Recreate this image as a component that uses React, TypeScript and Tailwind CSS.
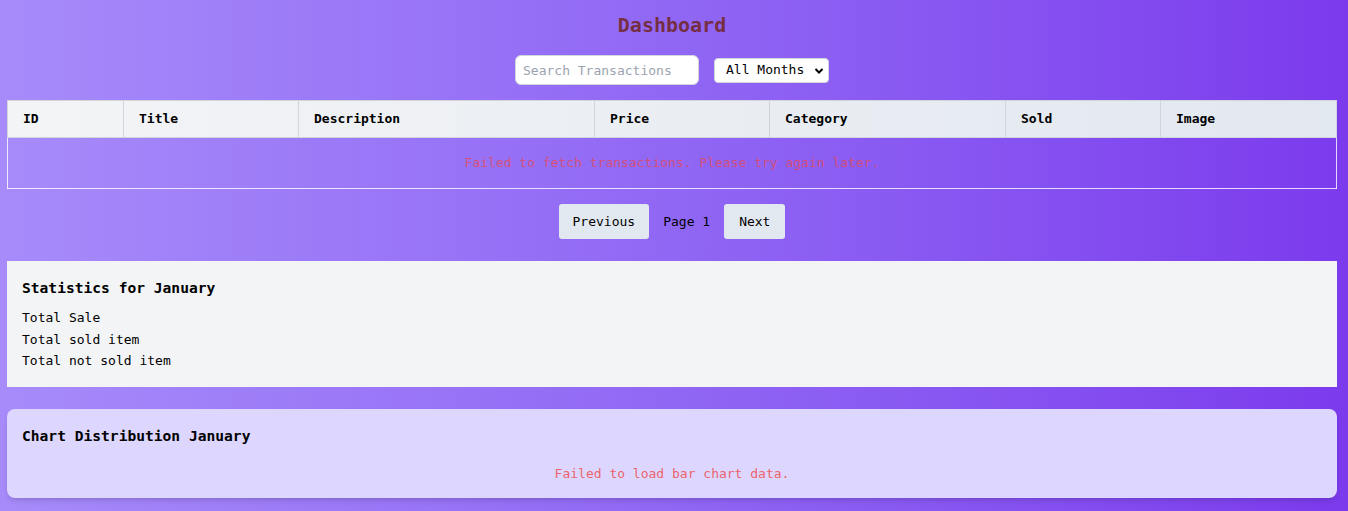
import React, { useState } from 'react';

const columns = [
  { label: 'ID', w: 'w-[116px]' },
  { label: 'Title', w: 'w-[175px]' },
  { label: 'Description', w: 'w-[296px]' },
  { label: 'Price', w: 'w-[175px]' },
  { label: 'Category', w: 'w-[236px]' },
  { label: 'Sold', w: 'w-[155px]' },
  { label: 'Image', w: 'w-auto' },
];

const App: React.FC = () => {
  const [search, setSearch] = useState('');
  const [month, setMonth] = useState('all');

  return (
    <div className="min-h-screen bg-gradient-to-r from-[#a78bfa] to-[#7c3aed] pl-[7px] pr-[11px] pt-[12px] pb-4 font-['DejaVu_Sans_Mono',monospace] text-[13px] text-black">
      <h1 className="text-center text-[20px] leading-[26px] font-bold text-[#6e1e10]/80">Dashboard</h1>

      <div className="mt-[17px] flex items-center justify-center gap-[15px]">
        <input
          value={search}
          onChange={(e) => setSearch(e.target.value)}
          placeholder="Search Transactions"
          className="h-[30px] w-[184px] rounded-md border border-gray-300 bg-white px-[7px] text-[13px] placeholder:text-[#9ca3af] outline-none"
        />
        <div className="relative">
          <select
            value={month}
            onChange={(e) => setMonth(e.target.value)}
            className="h-[25px] w-[115px] appearance-none rounded-[4px] border border-gray-300 bg-white pl-[11px] text-[13px] text-black outline-none"
          >
            <option value="all">All Months</option>
            <option value="1">January</option>
          </select>
          <svg className="pointer-events-none absolute right-[5px] top-[8px] h-[10px] w-[10px]" viewBox="0 0 10 10">
            <path d="M1.5 3 L5 6.5 L8.5 3" fill="none" stroke="#000" strokeWidth="2" />
          </svg>
        </div>
      </div>

      <table className="mt-[15px] w-full table-fixed border-collapse border border-white/80">
        <thead>
          <tr className="bg-gradient-to-r from-[#f3f4f6] to-[#e2e8f0]">
            {columns.map((c) => (
              <th
                key={c.label}
                className={`${c.w} h-[37px] border border-[#d1d5db] px-[15px] text-left text-[13px] font-bold`}
              >
                {c.label}
              </th>
            ))}
          </tr>
        </thead>
        <tbody>
          <tr>
            <td colSpan={7} className="h-[51px] text-center text-[13px] text-[#ef4444]/70">
              Failed to fetch transactions. Please try again later.
            </td>
          </tr>
        </tbody>
      </table>

      <div className="mt-[15px] flex items-center justify-center gap-[14px]">
        <button className="h-[35px] rounded-[3px] bg-[#e2e8f0] px-[14px] text-[13px]">Previous</button>
        <span className="text-[13px]">Page 1</span>
        <button className="h-[35px] rounded-[3px] bg-[#e2e8f0] px-[15px] text-[13px]">Next</button>
      </div>

      <div className="mt-[22px] bg-[#f3f4f6] px-[15px] pt-[15px] pb-[15px]">
        <h2 className="text-[14.6px] leading-[24px] font-bold">Statistics for January</h2>
        <div className="mt-[7px] leading-[21.5px]">
          <p>Total Sale</p>
          <p>Total sold item</p>
          <p>Total not sold item</p>
        </div>
      </div>

      <div className="mt-[22px] rounded-lg bg-[#ddd6fe] px-[15px] pt-[16px] pb-[14px] shadow-md">
        <h2 className="text-[14.6px] leading-[22px] font-bold">Chart Distribution January</h2>
        <p className="mt-[17px] text-center leading-[20px] text-[#ef4444]/80">Failed to load bar chart data.</p>
      </div>
    </div>
  );
};

export default App;
